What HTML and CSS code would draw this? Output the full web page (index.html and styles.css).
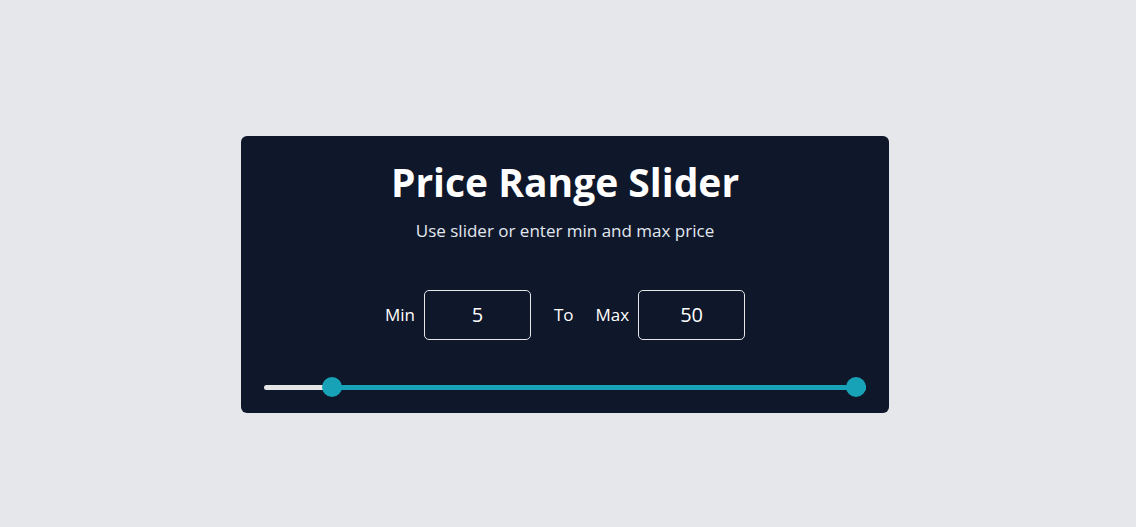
FILE: index.html
```html
<!DOCTYPE html>
<html lang="en">
<head>
  <meta charset="UTF-8" />
  <meta name="viewport" content="width=device-width, initial-scale=1.0" />
  <title>Price Range Slider</title>
  <link rel="stylesheet" href="styles.css">
</head>
<body>
  <div class="card">
    <h1>Price Range Slider</h1>
    <p class="sub">Use slider or enter min and max price</p>

    <div class="inputs">
      <label for="min">Min</label>
      <input type="number" id="min" value="5" />
      <span class="to">To</span>
      <label for="max">Max</label>
      <input type="number" id="max" value="50" />
    </div>

    <!-- slider: 0 to 50 -->
    <div class="slider">
      <div class="track">
        <div class="fill" style="left: 10%; right: 0%;"></div>
      </div>
      <div class="thumbs">
        <div class="thumb" style="left: 10%;"></div>
        <div class="thumb" style="left: 100%;"></div>
      </div>
    </div>
  </div>
</body>
</html>
```

FILE: styles.css
```css
body {
  font-family: "Open Sans", Arial, sans-serif;
  margin: 0;
  padding: 21px 6px 0 0;
  height: 527px;
  box-sizing: border-box;
  background: #e5e7eb;
  display: flex;
  justify-content: center;
  align-items: center;
}
.card {
  width: 648px;
  box-sizing: border-box;
  background: #0f172a;
  border-radius: 6px;
  padding: 20px 23px 16px;
  color: #fff;
  text-align: center;
}
h1 {
  margin: 0;
  font-size: 39px;
  line-height: 52px;
  font-weight: 700;
}
.sub {
  margin: 11px 0 0;
  font-size: 17px;
  color: #e2e8f0;
}
.inputs {
  display: flex;
  justify-content: center;
  align-items: center;
  margin-top: 48px;
  font-size: 17px;
}
.inputs label {
  margin-right: 9px;
}
.inputs input {
  width: 107px;
  height: 50px;
  box-sizing: border-box;
  background: transparent;
  border: 1px solid #e5e7eb;
  border-radius: 5px;
  color: #fff;
  font-family: inherit;
  font-size: 20px;
  text-align: center;
  -moz-appearance: textfield;
}
.inputs input::-webkit-outer-spin-button,
.inputs input::-webkit-inner-spin-button {
  -webkit-appearance: none;
  margin: 0;
}
.to {
  margin: 0 22px 0 23px;
}
.slider {
  position: relative;
  margin-top: 37px;
  height: 20px;
}
.track {
  position: absolute;
  left: 0;
  right: 0;
  top: 8px;
  height: 5px;
  background: #e5e5e5;
  border-radius: 3px;
}
.fill {
  position: absolute;
  top: 0;
  bottom: 0;
  background: #17a2b8;
}
.thumbs {
  position: absolute;
  left: 10px;
  right: 10px;
  top: 0;
  bottom: 0;
}
.thumb {
  position: absolute;
  top: 0;
  width: 20px;
  height: 20px;
  margin-left: -10px;
  border-radius: 50%;
  background: #17a2b8;
}
```
